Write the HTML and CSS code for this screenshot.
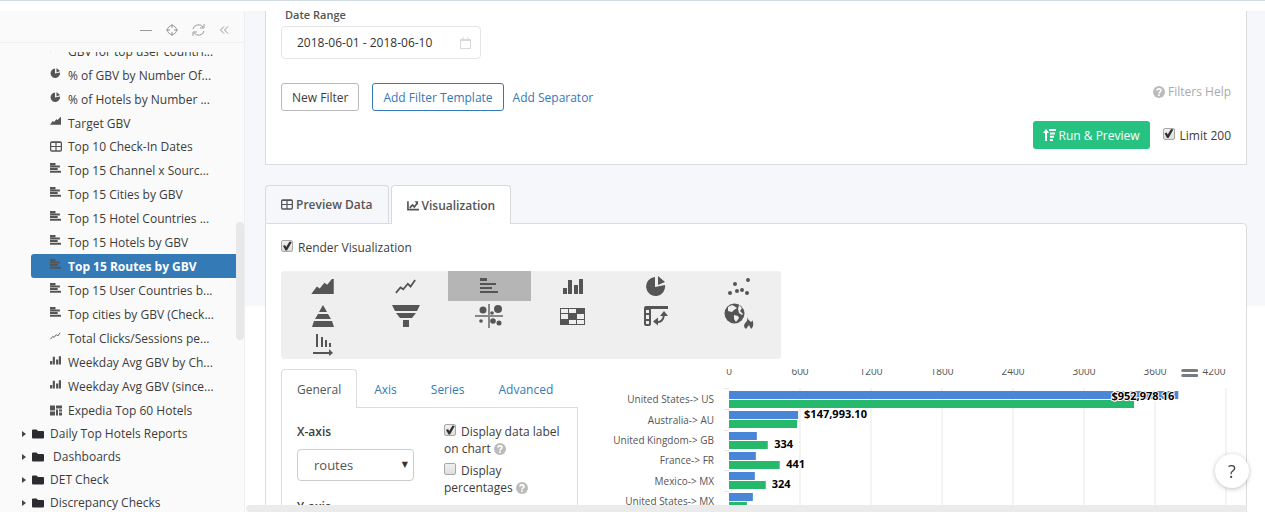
FILE: index.html
```html
<!DOCTYPE html>
<html lang="en">
<head>
<meta charset="utf-8">
<title>Top 15 Routes by GBV</title>
<link rel="stylesheet" href="styles.css">
</head>
<body>
<svg class="defs" aria-hidden="true">
  <symbol id="i-bars" viewBox="0 0 20 16"><path d="M1 0h7v3H1zM1 5h16v2H1zM1 9h12v2H1zM1 13h18v2H1z"/></symbol>
  <symbol id="i-bars-s" viewBox="0 0 10 9"><path d="M0 0h5v2H0zM0 2.300h9v1.800H0zM0 4.600h7v1.800H0zM0 7h10v1.900H0z"/></symbol>
  <symbol id="i-cols" viewBox="0 0 20 16"><path d="M0 10h4v6H0zM5 2h4v14H5zM11 7h4v9h-4zM16 1h4v15h-4z"/></symbol>
  <symbol id="i-area" viewBox="0 0 24 16"><path d="M0 16L6 8l3 2 5-6 3 2 5-6h2v16z"/></symbol>
  <symbol id="i-line" viewBox="0 0 24 16"><path d="M1 15l5-6 3 2 5-6 3 3 5-7" fill="none" stroke="currentColor" stroke-width="2"/></symbol>
  <symbol id="i-pie" viewBox="0 0 20 20"><path d="M9 1v10l10-2a9.500 9.500 0 1 1-10-8zM12 0l7 6-7 3z"/></symbol>
  <symbol id="i-table" viewBox="0 0 14 12"><path fill-rule="evenodd" d="M2 0h10a2 2 0 0 1 2 2v8a2 2 0 0 1-2 2H2a2 2 0 0 1-2-2V2a2 2 0 0 1 2-2zM1.500 2v3.300h4.800V2zM7.700 2v3.300h4.800V2zM1.500 6.700v3.800h4.800v-3.800zM7.700 6.700v3.800h4.800v-3.800z"/></symbol>
  <symbol id="i-folder" viewBox="0 0 12 10"><path d="M0 1.500Q0 .5 1 .5h3.500l1.500 1.500h5q1 0 1 1V8.500q0 1-1 1H1q-1 0-1-1z"/></symbol>
  <symbol id="i-help" viewBox="0 0 12 12"><circle cx="6" cy="6" r="6"/><path d="M4 4.600C4 2.300 8 2.300 8 4.500 8 5.800 6 5.800 6 7.400M6 8.300v1.600" fill="none" stroke="#fff" stroke-width="1.600"/></symbol>
</svg>

<div class="topbar"></div>
<div class="shell">
  <nav class="sidebar" aria-label="Reports">
    <div class="tools">
      <button aria-label="Collapse"><svg width="12" height="12" viewBox="0 0 12 12"><path d="M0 6.500h12" class="ln"/></svg></button>
      <button aria-label="Locate"><svg width="12" height="12" viewBox="0 0 12 12"><circle cx="6" cy="6" r="4.500" class="ln"/><path d="M6 0v4M6 8v4M0 6h4M8 6h4" class="ln"/></svg></button>
      <button aria-label="Refresh"><svg width="13" height="12" viewBox="0 0 13 12"><path d="M1 5a5.500 5 0 0 1 10-2M12 0v4H8M12 7a5.500 5 0 0 1-10 2M1 12V8h4" class="ln"/></svg></button>
      <button aria-label="Hide sidebar"><svg width="10" height="10" viewBox="0 0 10 10"><path d="M5 1.500L1.500 5 5 8.500M9 1.500L5.500 5 9 8.500" class="ln"/></svg></button>
    </div>
    <div class="scroll">
      <ul class="tree">
        <li class="leaf"><svg><use href="#i-line"/></svg><a href="#">GBV for top user countri...</a></li>
        <li class="leaf"><svg><use href="#i-pie"/></svg><a href="#">% of GBV by Number Of...</a></li>
        <li class="leaf"><svg><use href="#i-pie"/></svg><a href="#">% of Hotels by Number ...</a></li>
        <li class="leaf"><svg><use href="#i-area"/></svg><a href="#">Target GBV</a></li>
        <li class="leaf short"><svg class="big"><use href="#i-table"/></svg><a href="#">Top 10 Check-In Dates</a></li>
        <li class="leaf"><svg><use href="#i-bars-s"/></svg><a href="#">Top 15 Channel x Sourc...</a></li>
        <li class="leaf"><svg><use href="#i-bars-s"/></svg><a href="#">Top 15 Cities by GBV</a></li>
        <li class="leaf"><svg><use href="#i-bars-s"/></svg><a href="#">Top 15 Hotel Countries ...</a></li>
        <li class="leaf"><svg><use href="#i-bars-s"/></svg><a href="#">Top 15 Hotels by GBV</a></li>
        <li class="leaf active"><svg><use href="#i-bars-s"/></svg><a href="#">Top 15 Routes by GBV</a></li>
        <li class="leaf"><svg><use href="#i-bars-s"/></svg><a href="#">Top 15 User Countries b...</a></li>
        <li class="leaf"><svg><use href="#i-bars-s"/></svg><a href="#">Top cities by GBV (Check...</a></li>
        <li class="leaf"><svg><use href="#i-line"/></svg><a href="#">Total Clicks/Sessions pe...</a></li>
        <li class="leaf"><svg><use href="#i-cols"/></svg><a href="#">Weekday Avg GBV by Ch...</a></li>
        <li class="leaf"><svg><use href="#i-cols"/></svg><a href="#">Weekday Avg GBV (since...</a></li>
        <li class="leaf"><svg class="big" viewBox="0 0 12 10"><path d="M0 0h5v5H0zM6 0h6v3H6zM0 6h5v4H0zM6 4h2v6H6zM9 4h3v2H9zM9 7h3v3H9z"/></svg><a href="#">Expedia Top 60 Hotels</a></li>
        <li class="folder"><i></i><svg><use href="#i-folder"/></svg><a href="#">Daily Top Hotels Reports</a></li>
        <li class="folder"><i></i><svg><use href="#i-folder"/></svg><a href="#">&nbsp;Dashboards</a></li>
        <li class="folder"><i></i><svg><use href="#i-folder"/></svg><a href="#">DET Check</a></li>
        <li class="folder"><i></i><svg><use href="#i-folder"/></svg><a href="#">Discrepancy Checks</a></li>
      </ul>
    </div>
    <div class="vbar"></div>
  </nav>

  <main class="main">
    <section class="filters">
      <label class="field-label" for="range">Date Range</label>
      <div class="date">
        <input id="range" type="text" value="2018-06-01 - 2018-06-10">
        <svg width="11" height="12" viewBox="0 0 11 12"><path d="M.5 2.500h10v9H.5zM.5 3.500h10M3 0v3M8 0v3" class="ln"/></svg>
      </div>
      <div class="row">
        <button class="btn">New Filter</button>
        <button class="btn primary">Add Filter Template</button>
        <a class="link" href="#">Add Separator</a>
        <a class="help" href="#"><svg class="q"><use href="#i-help"/></svg>Filters Help</a>
      </div>
      <div class="row run">
        <button class="btn go"><svg width="13" height="12" viewBox="0 0 13 12"><path d="M2 12V4H0l3-4 3 4H4v8zM6 0h7v2H6zM7 3.400h5v2H7zM7 6.800h4v2H7zM7 10h3v2H7z"/></svg>Run &amp; Preview</button>
        <label class="check"><input type="checkbox" checked>Limit 200</label>
      </div>
    </section>

    <div class="tabs">
      <button class="tab"><svg width="12" height="11"><use href="#i-table"/></svg>Preview Data</button>
      <button class="tab on"><svg width="12" height="11" viewBox="0 0 13 11"><path d="M1 1v9h12M3 8l3-3 2 2 3-4" fill="none" stroke="currentColor" stroke-width="1.800"/><path d="M8 1h4v4z"/></svg>Visualization</button>
    </div>
    <section class="panel">
      <label class="check"><input type="checkbox" checked>Render Visualization</label>
      <div class="picker">
        <button aria-label="Area"><svg width="23" height="15"><use href="#i-area"/></svg></button>
        <button aria-label="Line"><svg width="22" height="15"><use href="#i-line"/></svg></button>
        <button class="on" aria-label="Bar"><svg width="20" height="16"><use href="#i-bars"/></svg></button>
        <button aria-label="Column"><svg width="20" height="16"><use href="#i-cols"/></svg></button>
        <button aria-label="Pie"><svg width="20" height="20"><use href="#i-pie"/></svg></button>
        <button aria-label="Scatter"><svg width="22" height="17" viewBox="0 0 22 17"><circle cx="2" cy="15" r="2"/><circle cx="7" cy="6" r="2"/><circle cx="9" cy="13" r="2"/><circle cx="14" cy="12" r="2"/><circle cx="20" cy="2" r="2"/><circle cx="19" cy="15" r="2"/></svg></button>
        <button aria-label="Pyramid"><svg width="22" height="22" viewBox="0 0 22 22"><path d="M11 0l4 7H7zM6 9h10l3 5H3zM2 16h18l2 6H0z"/></svg></button>
        <button aria-label="Funnel"><svg width="28" height="22" viewBox="0 0 28 22"><path d="M0 0h28l-3 6H3zM4 8h20l-4 5H8zM11 15h6v7h-6z"/></svg></button>
        <button aria-label="Bubble"><svg width="28" height="24" viewBox="0 0 28 24"><path d="M13 0h2v24h-2zM0 11h28v2H0z" fill="#888"/><circle cx="8" cy="6" r="3.500"/><circle cx="23" cy="5" r="4"/><circle cx="17" cy="9" r="1.800"/><circle cx="6" cy="17" r="1.800"/><circle cx="18" cy="17" r="2.800"/><circle cx="24" cy="19" r="2.500"/></svg></button>
        <button aria-label="Heat map"><svg width="25" height="17" viewBox="0 0 25 17"><path fill-rule="evenodd" d="M0 0h25v17H0zM1 1v4h7V1zM9 1v4h7V1zM1 6v5h7V6zM17 6v5h7V6zM9 12v4h7v-4zM17 12v4h7v-4z"/></svg></button>
        <button aria-label="Pivot"><svg width="24" height="20" viewBox="0 0 24 20"><path fill-rule="evenodd" d="M2 0h22v3H7v15q0 2-2 2H2q-2 0-2-2V2q0-2 2-2zM2 4v3h3V4zM2 9v4h3V9zM2 15v3h3v-3z"/><path d="M12 16q7 1 8-7" fill="none" stroke="currentColor" stroke-width="2"/><path d="M9 15.500l5-4v8zM20 5l4 5h-8z"/></svg></button>
        <button aria-label="Geo heat map"><svg width="30" height="26" viewBox="0 0 30 26"><circle cx="10.500" cy="10.500" r="10"/><path d="M4 4l4-2 2 1 3 2-3 2-2 2-4-1zM10 12l4 1 1 2-3 4-2-3zM15 2l3 3-2 3 3 3-1 1-3-2-1-4z" fill="#efefef"/><path d="M23 14q1 3 4 5 2-1 1-3 3 7-1 10l-2-4-3 4q-4-3 0-7 2-2 1-5z"/></svg></button>
        <button aria-label="Pareto"><svg width="20" height="22" viewBox="0 0 20 22"><path d="M3 0h2v13H3zM8 3h2v10H8zM12 6h2v7h-2zM16 9h2v4h-2zM0 18h16v-3l4 4-4 3v-2H0z"/></svg></button>
      </div>

      <div class="work">
        <div class="settings">
          <div class="subtabs">
            <button class="on">General</button><button>Axis</button><button>Series</button><button>Advanced</button>
          </div>
          <div class="form">
            <div class="axes">
              <label class="axis" for="xaxis">X-axis</label>
              <div class="select"><select id="xaxis"><option>routes</option></select></div>
              <strong class="axis">Y-axis</strong>
            </div>
            <div class="options">
              <label class="check"><input type="checkbox" checked>Display data label on chart <svg class="q"><use href="#i-help"/></svg></label>
              <label class="check"><input type="checkbox">Display percentages <svg class="q"><use href="#i-help"/></svg></label>
            </div>
          </div>
        </div>

        <div class="chart">
          <svg class="cats" width="138" height="150">
            <g text-anchor="end"><text x="136" y="34">United States-&gt; US</text><text x="136" y="55">Australia-&gt; AU</text><text x="136" y="75">United Kingdom-&gt; GB</text><text x="136" y="95">France-&gt; FR</text><text x="136" y="116">Mexico-&gt; MX</text><text x="136" y="136">United States-&gt; MX</text></g>
          </svg>
          <svg class="plot" height="150">
            <g class="grid"><path d="M-5 19.500h5M-5 40.500h5M-5 61.500h5M-5 81.500h5M-5 101.500h5M-5 122.500h5"/><line x1="14.286%" x2="14.286%" y1="19" y2="150"/><line x1="28.571%" x2="28.571%" y1="19" y2="150"/><line x1="42.857%" x2="42.857%" y1="19" y2="150"/><line x1="57.143%" x2="57.143%" y1="19" y2="150"/><line x1="71.429%" x2="71.429%" y1="19" y2="150"/><line x1="85.714%" x2="85.714%" y1="19" y2="150"/><line x1="100%" x2="100%" y1="19" y2="150"/></g>
            <g class="ticks"><text x="0" y="6">0</text><text x="14.286%" y="6">600</text><text x="28.571%" y="6">1200</text><text x="42.857%" y="6">1800</text><text x="57.143%" y="6">2400</text><text x="71.429%" y="6">3000</text><text x="85.714%" y="6">3600</text><text x="100%" y="6" class="last">4200</text></g>
            <g class="blue"><rect y="22" width="90.400%" height="8"/><rect y="42" width="13.900%" height="8"/><rect y="63" width="5.600%" height="8"/><rect y="83" width="5.400%" height="8"/><rect y="103" width="5.200%" height="8"/><rect y="124" width="4.800%" height="8"/></g>
            <g class="green"><rect y="31" width="81.500%" height="8"/><rect y="51" width="13.700%" height="8"/><rect y="72" width="7.800%" height="8"/><rect y="92" width="10.200%" height="8"/><rect y="112" width="7.400%" height="8"/><rect y="133" width="3.600%" height="8"/></g>
            <g class="values"><text x="89.600%" y="31" text-anchor="end">$952,978.16</text><text x="15.100%" y="49">$147,993.10</text><text x="9.100%" y="79">334</text><text x="11.500%" y="99">441</text><text x="8.600%" y="119">324</text></g>
            <svg x="92.500%" y="0" overflow="visible"><path d="M-6 1.500H8M-6 6.500H8" stroke="#777c80" stroke-width="3" stroke-linecap="round"/></svg>
          </svg>
        </div>
      </div>
    </section>
    <div class="hbar"></div>
  </main>
</div>
<button class="float">?</button>
</body>
</html>
```
FILE: styles.css
```css
* { box-sizing: border-box; }
body {
  margin: 0;
  height: 100vh;
  display: flex;
  flex-direction: column;
  overflow: hidden;
  background: #fff;
  color: #3c3c3c;
  font: 12px/17px "Open Sans", sans-serif;
}
button, input, select { font: inherit; color: inherit; margin: 0; }
button { background: none; border: 0; padding: 0; cursor: pointer; }
a { color: inherit; text-decoration: none; }
svg { fill: currentColor; flex: none; }
.defs { position: absolute; width: 0; height: 0; }
.ln { fill: none; stroke: currentColor; }

.topbar { height: 11px; flex: none; border-top: 1px solid #d0dbe3; }
.shell { flex: 1; min-height: 0; display: flex; }

.sidebar {
  position: relative;
  width: 245px;
  flex: none;
  display: flex;
  flex-direction: column;
  background: #fafafa;
  border-right: 1px solid #edeff2;
}
.tools {
  height: 32px;
  flex: none;
  display: flex;
  align-items: center;
  justify-content: flex-end;
  gap: 14px;
  padding: 6px 15px 0 0;
  border-bottom: 1px solid #eef0f2;
  color: #999;
}
.tools button { display: flex; }
.scroll { flex: 1; min-height: 0; margin-top: 9px; overflow: hidden; }
.tree { list-style: none; margin: -13px 8px 0 0; padding: 0; }
.tree li { display: flex; align-items: center; white-space: nowrap; }
.tree svg { color: #555; }
.leaf { height: 24px; margin-left: 31px; padding-left: 19px; gap: 7px; }
.leaf.short { height: 23px; }
.leaf svg { width: 11px; height: 10px; margin-bottom: 4px; }
.leaf svg.big { width: 12px; height: 11px; margin: 0 -1px 0 0; }
.leaf.active { background: #337ab7; color: #fff; font-weight: 700; border-radius: 3px 0 0 3px; }
.folder { height: 23px; padding-left: 22px; }
.folder i { border: 3px solid transparent; border-left: 4px solid #444; border-right: 0; margin-right: 6px; }
.folder svg { width: 12px; height: 10px; margin-right: 6px; color: #2c2c30; }
.vbar { position: absolute; right: 0; top: 211px; width: 8px; height: 118px; border-radius: 4px; background: #e8e8e8; }

.main {
  position: relative;
  flex: 1;
  min-width: 0;
  padding: 0 18px 0 20px;
  overflow: hidden;
  background: linear-gradient(#f6f7fb 295px, #fff 295px);
}
.filters { background: #fff; border: 1px solid #d9dde0; border-top: 0; padding: 0 15px 15px; }
.field-label { display: block; line-height: 8px; margin-bottom: 7px; padding-left: 4px; font-weight: 600; font-size: 11px; color: #555; }
.date {
  width: 200px;
  height: 33px;
  display: flex;
  align-items: center;
  padding: 0 9px 0 15px;
  border: 1px solid #e3e5e8;
  border-radius: 4px;
  color: #d8d8d8;
}
.date input { flex: 1; min-width: 0; border: 0; padding: 0; color: #333; outline: 0; }
.row { display: flex; align-items: center; margin-top: 24px; }
.btn { height: 28px; padding: 0 10px; border: 1px solid #bbb; border-radius: 3px; }
.primary { margin: 0 9px 0 13px; border-color: #337ab7; color: #337ab7; }
.link { color: #337ab7; }
.help { margin-left: auto; display: flex; align-items: center; gap: 3px; color: #aaa; padding-bottom: 11px; }
.q { width: 12px; height: 12px; color: #bbb; vertical-align: -2px; }
.run { margin-top: 10px; justify-content: flex-end; gap: 13px; }
.go { display: flex; align-items: center; gap: 3px; border: 0; background: #27c281; color: #fff; }

.check input {
  appearance: none;
  width: 12px;
  height: 12px;
  margin: 0 5px 0 0;
  border: 1px solid #a8a8a8;
  border-radius: 2px;
  background: linear-gradient(#f0f0f0, #dedede);
}
.check input:checked::after {
  content: "";
  display: block;
  height: 10px;
  background: #333;
  clip-path: polygon(10% 50%, 30% 40%, 42% 60%, 75% 5%, 98% 10%, 50% 95%, 35% 95%);
}

.tabs { display: flex; gap: 2px; margin-top: 20px; }
.tab {
  height: 38px;
  display: flex;
  align-items: center;
  gap: 3px;
  padding: 0 15px;
  border: 1px solid #d6dadd;
  border-bottom: 0;
  border-radius: 4px 4px 0 0;
  background: #f6f7fb;
  color: #555;
  font-weight: 600;
}
.tab.on { position: relative; height: 39px; margin-bottom: -1px; background: #fff; }
.panel { background: #fff; border: 1px solid #d9dde0; border-radius: 0 4px 0 0; padding: 15px; }
.panel > .check { display: block; }
.picker {
  width: 500px;
  max-width: 100%;
  display: grid;
  grid-template-columns: repeat(6, 1fr);
  grid-template-rows: 30px 30px 28px;
  margin-top: 15px;
  border-radius: 3px;
  background: #efefef;
  color: #555;
}
.picker button { display: flex; align-items: center; justify-content: center; }
.picker .on { background: #b5b5b5; }

.work { display: flex; margin-top: 10px; }
.settings { width: 297px; flex: none; }
.subtabs { display: flex; margin-bottom: -1px; }
.subtabs button { height: 39px; padding: 0 15px; border: 1px solid transparent; border-bottom: 0; color: #337ab7; }
.subtabs button:not(.on) { padding: 0 16px; }
.subtabs .on { position: relative; background: #fff; border-color: #ddd; border-radius: 4px 4px 0 0; color: #555; }
.form { display: flex; gap: 30px; padding: 15px; border: 1px solid #ddd; }
.axes { width: 117px; flex: none; }
.axis { display: block; font-weight: 600; margin-bottom: 9px; }
.select { position: relative; margin-bottom: 17px; }
.select::after { content: "▼"; position: absolute; right: 6px; top: 7px; font: 8px/17px "DejaVu Sans", sans-serif; color: #333; }
.select select { appearance: none; width: 100%; height: 32px; padding: 0 16px; border: 1px solid #ccc; border-radius: 4px; background: #fff; color: #555; font-size: 13px; }
.options .check { display: block; margin-bottom: 5px; }

.chart { flex: 1; min-width: 0; display: flex; gap: 13px; height: 150px; padding-right: 5px; clip-path: inset(0 -20px 0 0); }
.chart svg { overflow: visible; }
.cats { font-size: 10px; fill: #555; }
.plot { flex: 1; min-width: 0; }
.grid { stroke: #e8e8e8; fill: none; }
.ticks { font-size: 10px; fill: #555; text-anchor: middle; }
.ticks .last { transform: translateX(-12px); }
.blue { fill: #4a86d8; }
.green { fill: #26b96c; }
.values { font-size: 11px; font-weight: 700; fill: #000; paint-order: stroke; stroke: #fff; stroke-width: 2px; }
.hbar { position: absolute; left: 1px; right: 18px; bottom: 0; height: 7px; border-radius: 4px; background: #ebebeb; }
.float {
  position: fixed;
  right: 16px;
  bottom: 24px;
  width: 34px;
  height: 34px;
  border-radius: 50%;
  background: #fff;
  box-shadow: 0 1px 5px rgba(0, 0, 0, .25);
  color: #444;
  font-size: 18px;
}
```
